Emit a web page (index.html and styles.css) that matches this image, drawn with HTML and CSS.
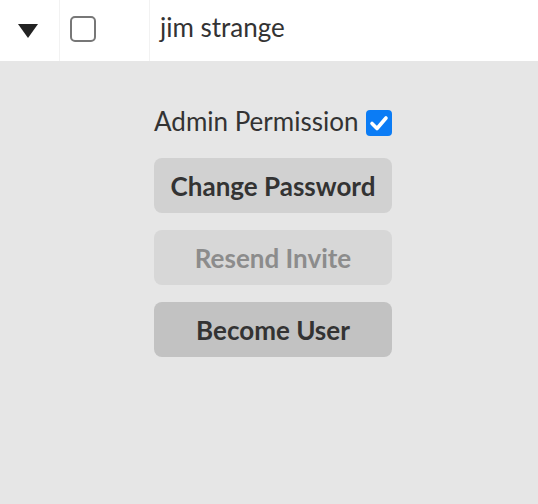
FILE: index.html
```html
<!DOCTYPE html>
<html>
<head>
<meta charset="utf-8">
<link rel="stylesheet" href="styles.css">
</head>
<body>
<div class="row">
  <div class="cell cell-toggle"><span class="caret"></span></div>
  <div class="cell cell-check"><span class="box"></span></div>
  <div class="cell cell-name">jim strange</div>
</div>
<div class="panel">
  <div class="actions">
    <label class="perm">Admin Permission
      <span class="checked">
        <svg width="26" height="26" viewBox="0 0 26 26"><rect x="0" y="0" width="26" height="26" rx="4" fill="#0b7cf5"/><path d="M6 13.5 L11 18.5 L20 8" fill="none" stroke="#fff" stroke-width="3.6" stroke-linecap="round" stroke-linejoin="round"/></svg>
      </span>
    </label>
    <button class="btn">Change Password</button>
    <button class="btn btn-disabled">Resend Invite</button>
    <button class="btn btn-dark">Become User</button>
  </div>
</div>
</body>
</html>
```
FILE: styles.css
```css
html, body {
  margin: 0;
  padding: 0;
  background: #e6e6e6;
  font-family: Lato, "Open Sans", sans-serif;
  color: #333;
}
.row {
  display: flex;
  height: 61px;
  background: #fff;
}
.cell {
  display: flex;
  align-items: center;
  box-sizing: border-box;
}
.cell-toggle {
  width: 60px;
  border-right: 1px solid #f2f2f2;
  justify-content: center;
  padding-right: 4px;
}
.caret {
  width: 0;
  height: 0;
  border-left: 10px solid transparent;
  border-right: 10px solid transparent;
  border-top: 14px solid #222;
  margin-top: 0;
}
.cell-check {
  width: 90px;
  border-right: 1px solid #f2f2f2;
  padding-left: 10px;
}
.box {
  width: 26px;
  height: 26px;
  box-sizing: border-box;
  border: 2px solid #777;
  border-radius: 5px;
  margin-top: -3px;
}
.cell-name {
  padding-left: 10px;
  font-size: 26px;
  padding-bottom: 8px;
  color: #333;
}
.panel {
  height: 443px;
  padding-left: 154px;
  padding-top: 44px;
  box-sizing: border-box;
}
.actions {
  width: 238px;
  display: flex;
  flex-direction: column;
  gap: 17px;
}
.perm {
  display: flex;
  align-items: center;
  font-size: 26px;
  height: 32px;
  margin-bottom: 4px;
  white-space: nowrap;
  color: #333;
}
.checked {
  display: inline-flex;
  margin-left: 8px;
  margin-top: 4px;
}
.btn {
  font-family: inherit;
  font-size: 26px;
  font-weight: 700;
  height: 55px;
  border: none;
  border-radius: 8px;
  background: #d1d1d1;
  color: #333;
  padding: 0;
}
.btn-disabled {
  background: #d7d7d7;
  color: #8c8c8c;
}
.btn-dark {
  background: #c2c2c2;
}
```
